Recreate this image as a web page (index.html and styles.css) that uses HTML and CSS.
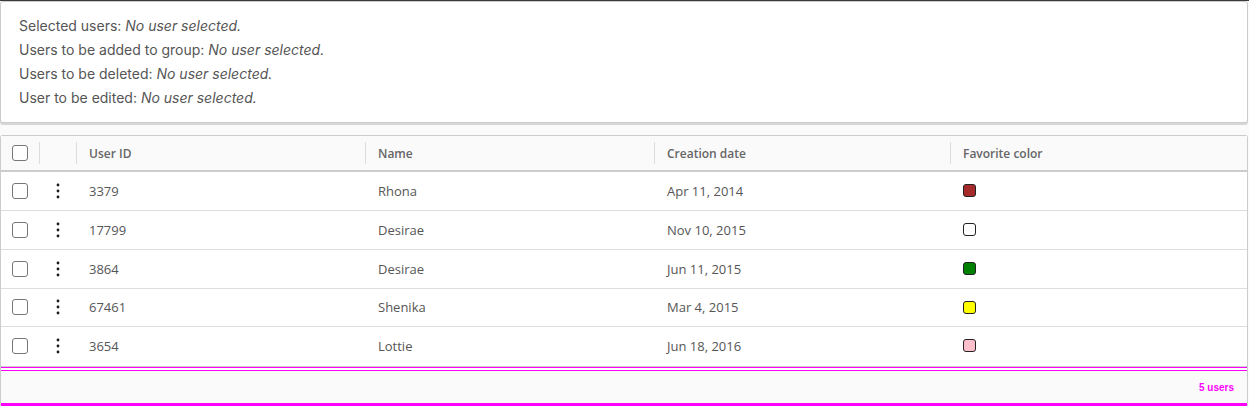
FILE: index.html
```html
<!DOCTYPE html>
<html>
<head>
<meta charset="utf-8">
<link rel="stylesheet" href="styles.css">
</head>
<body>
<div class="topline"></div>
<div class="card">
  <div class="line">Selected users: <em>No user selected.</em></div>
  <div class="line">Users to be added to group: <em>No user selected.</em></div>
  <div class="line">Users to be deleted: <em>No user selected.</em></div>
  <div class="line">User to be edited: <em>No user selected.</em></div>
</div>
<div class="gap"></div>
<div class="grid">
  <div class="row head">
    <div class="cell c-check"><span class="cb"></span></div>
    <div class="cell c-act sep"></div>
    <div class="cell c-id sep">User ID</div>
    <div class="cell c-name sep">Name</div>
    <div class="cell c-date sep">Creation date</div>
    <div class="cell c-color sep">Favorite color</div>
  </div>
  <div class="row">
    <div class="cell c-check"><span class="cb"></span></div>
    <div class="cell c-act"><svg class="dots" width="4" height="16" viewBox="0 0 4 16"><circle cx="2" cy="2" r="1.4"/><circle cx="2" cy="8" r="1.4"/><circle cx="2" cy="14" r="1.4"/></svg></div>
    <div class="cell c-id">3379</div>
    <div class="cell c-name">Rhona</div>
    <div class="cell c-date">Apr 11, 2014</div>
    <div class="cell c-color"><span class="sw sw-brown"></span></div>
  </div>
  <div class="row">
    <div class="cell c-check"><span class="cb"></span></div>
    <div class="cell c-act"><svg class="dots" width="4" height="16" viewBox="0 0 4 16"><circle cx="2" cy="2" r="1.4"/><circle cx="2" cy="8" r="1.4"/><circle cx="2" cy="14" r="1.4"/></svg></div>
    <div class="cell c-id">17799</div>
    <div class="cell c-name">Desirae</div>
    <div class="cell c-date">Nov 10, 2015</div>
    <div class="cell c-color"><span class="sw sw-white"></span></div>
  </div>
  <div class="row">
    <div class="cell c-check"><span class="cb"></span></div>
    <div class="cell c-act"><svg class="dots" width="4" height="16" viewBox="0 0 4 16"><circle cx="2" cy="2" r="1.4"/><circle cx="2" cy="8" r="1.4"/><circle cx="2" cy="14" r="1.4"/></svg></div>
    <div class="cell c-id">3864</div>
    <div class="cell c-name">Desirae</div>
    <div class="cell c-date">Jun 11, 2015</div>
    <div class="cell c-color"><span class="sw sw-green"></span></div>
  </div>
  <div class="row short">
    <div class="cell c-check"><span class="cb"></span></div>
    <div class="cell c-act"><svg class="dots" width="4" height="16" viewBox="0 0 4 16"><circle cx="2" cy="2" r="1.4"/><circle cx="2" cy="8" r="1.4"/><circle cx="2" cy="14" r="1.4"/></svg></div>
    <div class="cell c-id">67461</div>
    <div class="cell c-name">Shenika</div>
    <div class="cell c-date">Mar 4, 2015</div>
    <div class="cell c-color"><span class="sw sw-yellow"></span></div>
  </div>
  <div class="row last">
    <div class="cell c-check"><span class="cb"></span></div>
    <div class="cell c-act"><svg class="dots" width="4" height="16" viewBox="0 0 4 16"><circle cx="2" cy="2" r="1.4"/><circle cx="2" cy="8" r="1.4"/><circle cx="2" cy="14" r="1.4"/></svg></div>
    <div class="cell c-id">3654</div>
    <div class="cell c-name">Lottie</div>
    <div class="cell c-date">Jun 18, 2016</div>
    <div class="cell c-color"><span class="sw sw-pink"></span></div>
  </div>
  <div class="footer">
    <span class="count">5 users</span>
  </div>
</div>
</body>
</html>
```
FILE: styles.css
```css
html, body {
  margin: 0;
  padding: 0;
}
body {
  background: #fafafa;
  font-family: "Open Sans", "Liberation Sans", sans-serif;
  color: #565656;
  width: 1249px;
  height: 406px;
  overflow: hidden;
}
.topline {
  height: 1px;
  background: #3a3a3a;
}
.card {
  box-sizing: border-box;
  width: 1248px;
  background: #fff;
  border: 1px solid #cccccc;
  border-radius: 3px;
  box-shadow: 0 2px 0 0 #d7d7d7;
  padding: 12px 18px 12px;
  font-family: "Inter", "Open Sans", sans-serif;
  font-size: 14px;
  color: #555;
}
.line {
  line-height: 24px;
  height: 24px;
}
.line em {
  font-style: italic;
}
.gap {
  height: 12px;
}
.grid {
  box-sizing: border-box;
  width: 1248px;
  border: 1px solid #cccccc;
  border-bottom: none;
  border-radius: 3px 3px 0 0;
  background: #fff;
}
.row {
  display: flex;
  height: 38px;
  border-bottom: 1px solid #dddddd;
  font-size: 13px;
  color: #565656;
}
.row.short {
  height: 37px;
}
.row.head {
  height: 34px;
  background: #fafafa;
  border-bottom: 2px solid #cccccc;
  font-size: 12px;
  font-weight: 600;
  color: #666;
}
.row.head .cell {
  padding-bottom: 0;
}
.row.last {
  height: 39px;
  border-bottom: 1px solid #cccccc;
}
.row.last .cell {
  padding-bottom: 2px;
}
.cell {
  position: relative;
  display: flex;
  align-items: center;
  box-sizing: border-box;
  padding-left: 12px;
  padding-bottom: 1px;
}
.sep::before {
  content: "";
  position: absolute;
  left: 0;
  top: 6px;
  bottom: 6px;
  width: 1px;
  background: #dddddd;
}
.c-check { width: 38px; justify-content: center; padding-left: 0; }
.c-act { width: 37px; justify-content: center; padding-left: 0; }
.c-id { width: 289px; padding-left: 13px; }
.c-name { width: 289px; padding-left: 13px; }
.c-date { width: 296px; padding-left: 13px; }
.c-color { flex: 1; padding-left: 13px; }
.cb {
  box-sizing: border-box;
  width: 16px;
  height: 16px;
  border: 1px solid #777;
  border-radius: 3px;
  background: #fff;
}
.dots {
  fill: #1a1a1a;
}
.sw {
  box-sizing: border-box;
  width: 13px;
  height: 13px;
  border: 1px solid #222;
  border-radius: 3px;
}
.sw-brown { background: #a52a2a; }
.sw-white { background: #ffffff; }
.sw-green { background: #008000; }
.sw-yellow { background: #ffff00; }
.sw-pink { background: #ffc0cb; }
.footer {
  box-sizing: border-box;
  height: 39px;
  background: #fafafa;
  border-top: 1px solid #ff00ff;
  box-shadow: inset 0 2px 0 #ffffff, inset 0 3px 0 #ff00ff;
  border-bottom: 3px solid #ff00ff;
  display: flex;
  align-items: center;
  justify-content: flex-end;
  padding: 3px 13px 0 0;
}
.count {
  color: #ff00ff;
  font-size: 10px;
  font-family: "Liberation Sans", sans-serif;
  font-weight: bold;
}
```
